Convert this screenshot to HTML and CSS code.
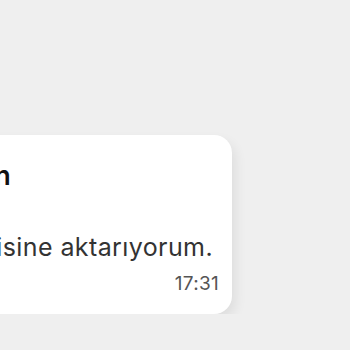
FILE: index.html
```html
<!DOCTYPE html>
<html lang="tr">
<head>
    <meta charset="UTF-8">
    <meta name="viewport" content="width=device-width, initial-scale=1.0">
    <title>Mesaj</title>
    <link rel="stylesheet" href="styles.css">
</head>
<body>
    <section class="chat">
        <div class="bubble">
            <h2 class="sender">Müşteri Temsilcisi Can</h2>
            <p class="message">Talebinizi birim yöneticisine aktarıyorum.</p>
            <span class="time">17:31</span>
        </div>
    </section>
</body>
</html>
```

FILE: styles.css
```css
body {
    margin: 0;
    padding: 0;
    background-color: #efefef;
    font-family: Inter, "Noto Sans", sans-serif;
    color: #333;
}

.chat {
    display: flex;
    justify-content: flex-end;
    width: 232px;
    padding-top: 135px;
}

.bubble {
    flex-shrink: 0;
    display: flex;
    flex-direction: column;
    background-color: #fff;
    border-radius: 18px;
    padding: 23px 13px 17px 19px;
    box-shadow: 4px 6px 12px rgba(0, 0, 0, 0.07);
}

.sender {
    margin: 0;
    font-size: 27px;
    font-weight: 600;
    line-height: 36px;
    color: #111;
}

.message {
    margin: 38px 6px 0 0;
    font-size: 25px;
    line-height: 30px;
    letter-spacing: 0.4px;
    color: #333;
}

.time {
    align-self: flex-end;
    margin-top: 9px;
    font-size: 19px;
    line-height: 26px;
    letter-spacing: 0.3px;
    color: #555;
}
```
